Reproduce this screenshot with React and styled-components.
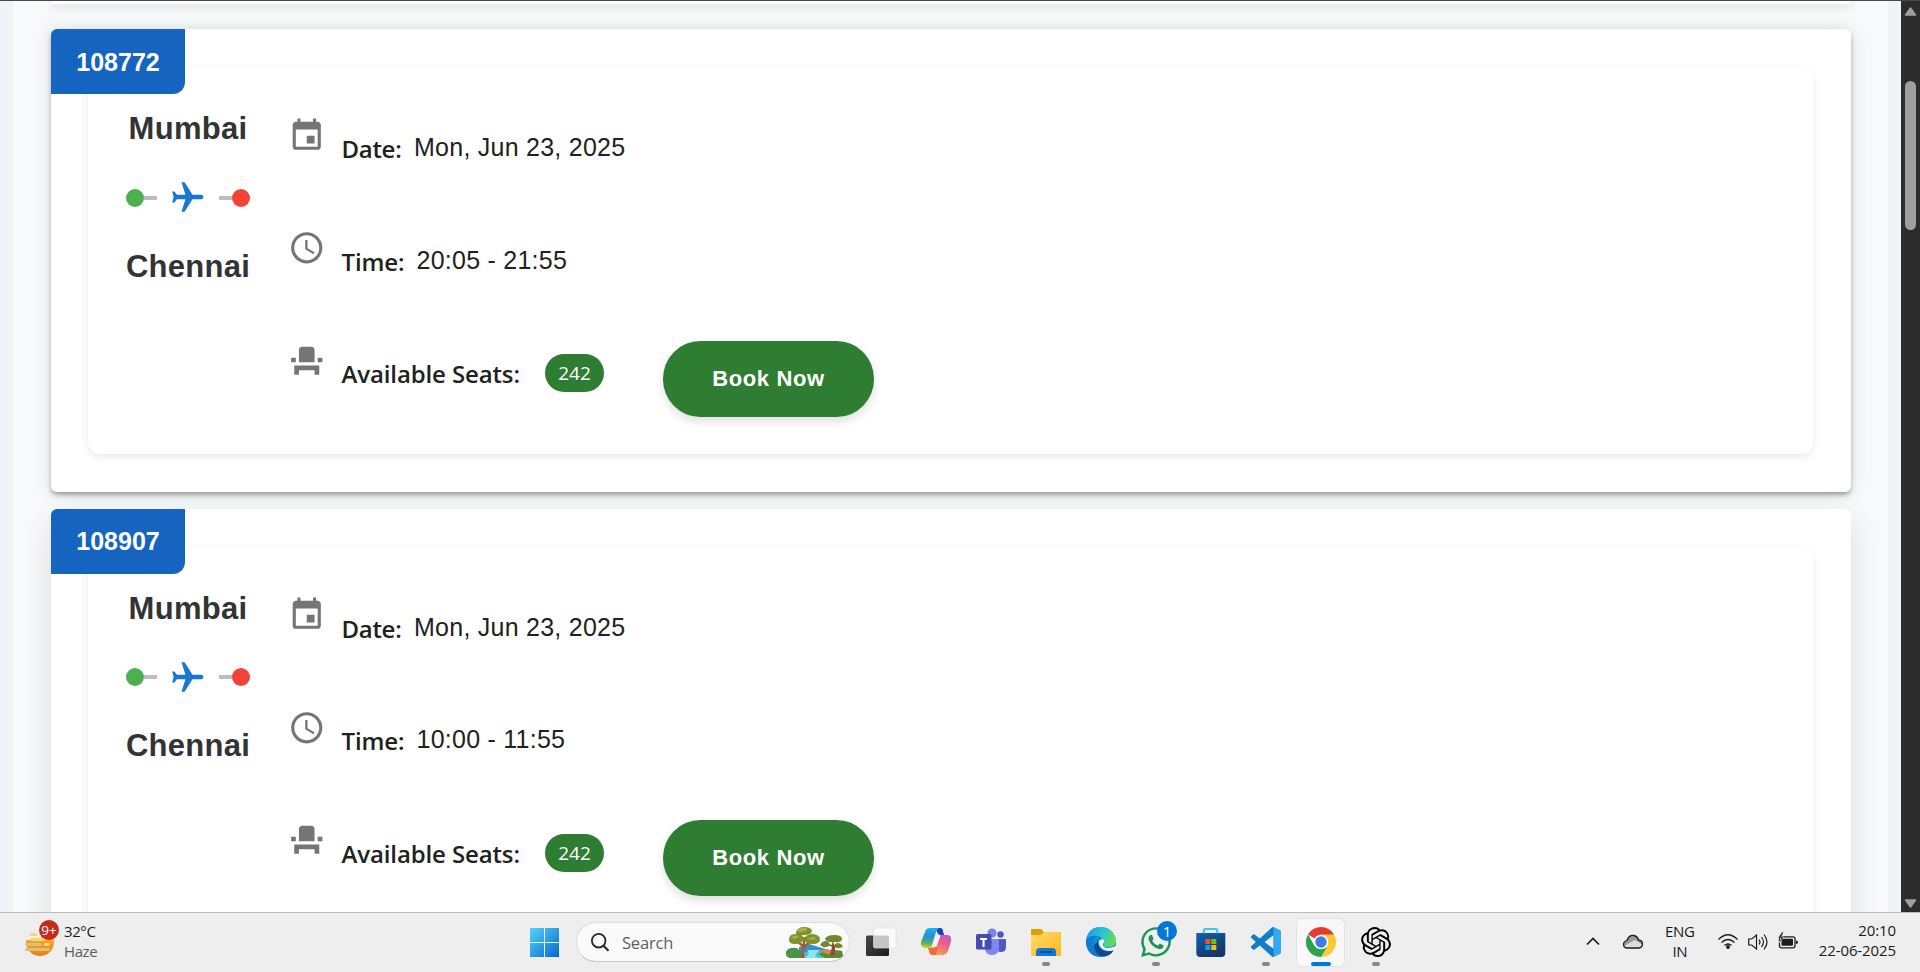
import React from "react";
import styled, { createGlobalStyle } from "styled-components";
import { FaWhatsapp } from "react-icons/fa";

const GlobalStyle = createGlobalStyle`
  *, *::before, *::after { box-sizing: border-box; }
  html, body { margin: 0; padding: 0; }
  body { overflow: hidden; font-family: "Liberation Sans", Arial, sans-serif; }
  svg { display: block; flex: none; }
`;

const humanist = `"Open Sans", "Noto Sans", sans-serif`;

const Desktop = styled.div`
  width: 1920px;
  height: 972px;
  display: flex;
  flex-direction: column;
  overflow: hidden;
  border-top: 1px solid #4a4a4c;
`;

const Browser = styled.div`
  flex: 1;
  min-height: 0;
  display: flex;
`;

const Page = styled.main`
  flex: 1;
  height: 911px;
  overflow: hidden;
  padding: 0 13px;
  background: #f0f4f9;
`;

const Results = styled.div`
  height: 911px;
  padding: 0 37px 0 38px;
  background: #f8f9fb;
  overflow: hidden;
  display: flex;
  flex-direction: column;
`;

const Card = styled.article`
  position: relative;
  flex: none;
  height: 463px;
  margin-bottom: 16.5px;
  padding: 38px 38px 37px 37px;
  border-radius: 6px;
  background: #fff;
  box-shadow: ${(p) =>
    p.$raised
      ? "0 4px 5px -2px rgba(0,0,0,.22), 0 3px 5px rgba(0,0,0,.17), 0 1px 18px rgba(0,0,0,.13)"
      : "0 12px 30px rgba(0,0,0,.12)"};
`;

const CardTail = styled.div`
  flex: none;
  height: 3px;
  margin-bottom: 25px;
  border-radius: 0 0 6px 6px;
  background: #fff;
  box-shadow: 0 2px 10px rgba(0, 0, 0, 0.22);
`;

const FlightNumber = styled.div`
  position: absolute;
  top: 0;
  left: 0;
  width: 134px;
  height: 65px;
  padding-top: 1px;
  display: flex;
  align-items: center;
  justify-content: center;
  border-radius: 6px 0 12px 0;
  background: #1565c0;
  color: #fff;
  font-size: 25px;
  font-weight: 700;
`;

const Panel = styled.div`
  height: 387px;
  padding-left: 37.5px;
  display: flex;
  border-radius: 12px;
  background: #fff;
  box-shadow: 0 3px 8px rgba(0, 0, 0, 0.09);
`;

const Route = styled.div`
  width: 125px;
  padding-top: 42px;
  display: flex;
  flex-direction: column;
  align-items: center;
  gap: 30.125px;
`;

const City = styled.div`
  font-size: 31px;
  line-height: 40px;
  font-weight: 700;
  letter-spacing: 0.28px;
  color: #333;
`;

const Path = styled.div`
  display: flex;
  align-items: center;
`;

const Dot = styled.span`
  width: 18px;
  height: 18px;
  border-radius: 50%;
  background: ${(p) => p.$color};
`;

const Line = styled.span`
  width: 13px;
  height: 4px;
  background: #bdbdbd;
`;

const PlaneIcon = styled.svg`
  width: 37.5px;
  height: 37.5px;
  margin: 0 12px;
  fill: #1976d2;
  transform: rotate(90deg);
`;

const Details = styled.div`
  padding: 49.5px 0 0 37.5px;
  display: flex;
  flex-direction: column;
  gap: 37.5px;
`;

const Row = styled.div`
  height: 75px;
  display: flex;
  align-items: flex-start;
`;

const RowIcon = styled.svg`
  width: 37.5px;
  height: 37.5px;
  margin-right: 16px;
  fill: #757575;
`;

const Label = styled.div`
  width: ${(p) => p.$width}px;
  margin-top: 15.5px;
  font-family: ${humanist};
  font-size: 24px;
  line-height: 34px;
  font-weight: 600;
  letter-spacing: ${(p) => p.$spacing || 0}px;
  white-space: nowrap;
  color: #212121;
`;

const Value = styled.div`
  margin-top: 15.5px;
  font-size: 25px;
  line-height: 30px;
  letter-spacing: 0.01em;
  color: #212121;
`;

const Seats = styled.div`
  width: 59px;
  height: 38px;
  margin: 12.5px 59px 0 0;
  display: flex;
  align-items: center;
  justify-content: center;
  border-radius: 19px;
  background: #2e7d32;
  color: #fff;
  font-family: ${humanist};
  font-size: 19px;
`;

const BookButton = styled.button`
  width: 211px;
  height: 76px;
  margin: -0.75px 0 0;
  padding: 0;
  border: 0;
  border-radius: 37.5px;
  background: #2e7d32;
  color: #fff;
  font: 700 22px "Liberation Sans", Arial, sans-serif;
  letter-spacing: 0.625px;
  box-shadow: 0 5px 10px rgba(0, 0, 0, 0.12);
`;

const Scrollbar = styled.div`
  width: 19px;
  height: 911px;
  padding: 5px 0 3px;
  display: flex;
  flex-direction: column;
  align-items: center;
  background: #2c2c2c;
`;

const Thumb = styled.div`
  width: 11px;
  height: 149px;
  margin: 65px 0 auto;
  border-radius: 6px;
  background: #9f9f9f;
`;

const Taskbar = styled.footer`
  flex: none;
  height: 60px;
  display: flex;
  border-top: 1px solid #bcbcbc;
  background: #eee;
  font-family: ${humanist};
  font-size: 15px;
  color: #1b1b1b;
`;

const Weather = styled.div`
  width: 528.5px;
  padding: 7px 0 0 25px;
  display: flex;
`;

const WeatherIcon = styled.div`
  position: relative;
  width: 39px;
`;

const AlertBadge = styled.span`
  position: absolute;
  top: 0;
  left: 14px;
  width: 20px;
  height: 20px;
  border-radius: 50%;
  background: #c42b1c;
  color: #fff;
  font-size: 13.5px;
  line-height: 20px;
  text-align: center;
`;

const Stack = styled.div`
  padding-top: ${(p) => p.$top || 0}px;
  display: flex;
  flex-direction: column;
  align-items: ${(p) => p.$align || "flex-start"};
  line-height: 20px;
  letter-spacing: ${(p) => p.$spacing || 0}px;
  white-space: nowrap;
`;

const Muted = styled.span`
  color: #5c5c5c;
`;

const StartButton = styled.div`
  width: 47.5px;
  padding-top: 14px;
`;

const SearchBox = styled.div`
  width: 274px;
  height: 40px;
  margin: 9px 3px 0 0;
  padding: 0 6px 0 14px;
  display: flex;
  align-items: center;
  border: 1px solid #dcdcdc;
  border-bottom-color: #c6c6c6;
  border-radius: 20px;
  background: #fafafa;
`;

const SearchText = styled.span`
  flex: 1;
  padding-left: 13px;
  font-size: 16.5px;
  letter-spacing: -0.2px;
  color: #5f5f5f;
`;

const AppSlot = styled.div`
  position: relative;
  width: 55px;
  height: 59px;
  padding: 14px 0 0;
  display: flex;
  justify-content: center;
`;

const ActiveTile = styled.div`
  position: absolute;
  left: 3px;
  top: 5px;
  width: 49px;
  height: 49px;
  border: 1px solid #e3e3e3;
  border-radius: 6px;
  background: #f8f8f8;
`;

const Indicator = styled.span`
  position: absolute;
  left: 50%;
  top: 49px;
  width: ${(p) => (p.$active ? 20 : 8)}px;
  height: 4px;
  border-radius: 2px;
  background: ${(p) => (p.$active ? "#0078d4" : "#868686")};
  transform: translateX(-50%);
`;

const CountBadge = styled.span`
  position: absolute;
  left: 29px;
  top: 8px;
  width: 20px;
  height: 20px;
  border-radius: 50%;
  background: #0078d4;
  color: #fff;
  font-size: 15px;
  line-height: 20px;
  text-align: center;
`;

const Glyph = styled.svg`
  position: relative;
  width: 30px;
  height: 30px;
  overflow: visible;
`;

const WhatsApp = styled(FaWhatsapp)`
  width: 34px;
  height: 34px;
  margin-top: -2px;
  color: #1d9457;
`;

const Tray = styled.div`
  margin-left: auto;
  padding: 7px 24px 0 0;
  display: flex;
`;

const TrayIcon = styled.svg`
  height: 20px;
  margin: 12px ${(p) => p.$gap}px 0 0;
  overflow: visible;
`;

const flights = [
  { id: "108772", time: "20:05 - 21:55", raised: true },
  { id: "108907", time: "10:00 - 11:55", raised: false },
];

function FlightCard({ id, time, raised }) {
  return (
    <Card $raised={raised}>
      <Panel>
        <Route>
          <City>Mumbai</City>
          <Path>
            <Dot $color="#4caf50" />
            <Line />
            <PlaneIcon viewBox="0 0 24 24">
              <path d="M21 16v-2l-8-5V3.500c0-.83-.67-1.500-1.500-1.500S10 2.670 10 3.500V9l-8 5v2l8-2.500V19l-2 1.500V22l3.500-1 3.500 1v-1.500L13 19v-5.500l8 2.500z" />
            </PlaneIcon>
            <Line />
            <Dot $color="#f44336" />
          </Path>
          <City>Chennai</City>
        </Route>
        <Details>
          <Row>
            <RowIcon viewBox="0 0 24 24">
              <path d="M17 12h-5v5h5v-5zM16 1v2H8V1H6v2H5c-1.110 0-1.990.9-1.990 2L3 19c0 1.100.89 2 2 2h14c1.100 0 2-.9 2-2V5c0-1.100-.9-2-2-2h-1V1h-2zm3 18H5V8h14v11z" />
            </RowIcon>
            <Label $width={72.5} $spacing={-0.3}>Date:</Label>
            <Value>Mon, Jun 23, 2025</Value>
          </Row>
          <Row>
            <RowIcon viewBox="0 0 24 24">
              <path d="M11.990 2C6.470 2 2 6.480 2 12s4.470 10 9.990 10C17.520 22 22 17.520 22 12S17.520 2 11.990 2zM12 20c-4.420 0-8-3.580-8-8s3.580-8 8-8 8 3.580 8 8-3.580 8-8 8zm.5-13H11v6l5.250 3.150.75-1.230-4.500-2.670z" />
            </RowIcon>
            <Label $width={75} $spacing={-0.1}>Time:</Label>
            <Value>{time}</Value>
          </Row>
          <Row>
            <RowIcon viewBox="0 0 24 24">
              <path d="M4 18v3h3v-3h10v3h3v-6H4zm15-8h3v3h-3zM2 10h3v3H2zm15 3H7V5c0-1.100.9-2 2-2h6c1.100 0 2 .9 2 2v8z" />
            </RowIcon>
            <Label $width={203.5} $spacing={-0.12}>
              Available Seats:
            </Label>
            <Seats>242</Seats>
            <BookButton>Book Now</BookButton>
          </Row>
        </Details>
      </Panel>
      <FlightNumber>{id}</FlightNumber>
    </Card>
  );
}

const HazeIcon = () => (
  <svg width="30" height="38" viewBox="0 0 30 38">
    <defs>
      <linearGradient id="haze" x1="0" y1="0" x2="0" y2="1">
        <stop offset="0" stopColor="#ffc532" />
        <stop offset="1" stopColor="#f27a17" />
      </linearGradient>
    </defs>
    <circle cx="15" cy="22" r="14" fill="url(#haze)" />
    <path d="M0 4h16v16H0z" fill="#eee" />
    <g strokeLinecap="round" strokeWidth="3" stroke="#f3d67c">
      <path d="M6.500 14.500h4M6.500 19.500h12" />
      <path d="M1.500 24.500h14M1.500 29.500h22" stroke="#d9c27c" />
      <path d="M20.500 24.500h3" />
    </g>
  </svg>
);

const StartIcon = () => (
  <Glyph viewBox="0 0 30 30">
    <defs>
      <linearGradient id="win" x1="0" y1="0" x2="1" y2="1">
        <stop offset="0" stopColor="#55d3fc" />
        <stop offset="1" stopColor="#0669cf" />
      </linearGradient>
    </defs>
    <path fill="url(#win)" d="M1 1h14v14H1zM16 1h14v14H16zM1 16h14v14H1zM16 16h14v14H16z" />
  </Glyph>
);

const ForestIcon = () => (
  <svg width="58" height="33" viewBox="0 0 58 33">
    <path d="M14 21l10-3 13 4 10 3-6 7H14z" fill="#3b8fc4" />
    <path d="M18 27l12-3 14 4 6 4H15z" fill="#45c5e2" />
    <path d="M33 28q12-6 24-3l1 5-3 2H40z" fill="#598b35" />
    <path d="M32 25q12-4 20 1l-7 3q-8-3-13-4z" fill="#c58a55" />
    <path d="M1 26q2-4 6-4 5-1 7 2 4 1 3 8H5q-5-1-4-6z" fill="#4b9146" />
    <path d="M15 32q4-7 1-12L9 14l1.500-1 7 5 1-7h1.500v7l8-4 1 1-9 6-1 6 1 5z" fill="#a25a39" />
    <path d="M45 29l2-8-6-4 6 2 1-6 1 6 5-2-4 4v8z" fill="#90482f" />
    <path d="M11 6q2-5 8-5 7 0 8 4 0 4-8 4-9 1-8-3zM4 14q0-6 6-6 8 0 9 5-2 5-9 5-6 0-6-4zM19 14q1-6 9-6 7 1 7 5 0 5-7 5-8 0-9-4z" fill="#7e952f" />
    <path d="M12 5q3-4 9-3 2 2-2 3.500-5 1-7-.5zM6 12q4-4 8-2-3 4-8 2zM23 13q4-3 8-1-3 3-8 1z" fill="#b2b044" />
    <path d="M40 13q2-4 9-4 8 0 8 4-1 4-7 3-8 1-10-3zM35 19q2-4 6-4 4 1 4 4.500-4 2.500-7 1.500zM49 20q1-3 4.500-3 5 2 4 4-6 3-8.500-1z" fill="#6f8a2c" />
    <path d="M22 24q5 4-3 8h14q-6-3 2-8z" fill="#8ee6f0" />
  </svg>
);

const TaskViewIcon = () => (
  <Glyph viewBox="0 0 30 30">
    <defs>
      <linearGradient id="tv" x1="0" y1="0" x2="1" y2="1">
        <stop offset="0" stopColor="#484848" />
        <stop offset="1" stopColor="#1a1a1a" />
      </linearGradient>
    </defs>
    <rect x="0" y="8.500" width="23" height="20.500" rx="1.500" fill="url(#tv)" />
    <rect x="7.500" y="1" width="22.500" height="20" rx="1.500" fill="#fff" fillOpacity=".72" stroke="#dedede" strokeWidth=".7" />
  </Glyph>
);

const CopilotIcon = () => (
  <Glyph viewBox="0 0 30 30">
    <defs>
      <linearGradient id="cpA" x1=".5" y1="0" x2=".35" y2="1">
        <stop offset="0" stopColor="#16b5e8" />
        <stop offset=".4" stopColor="#2190d8" />
        <stop offset=".75" stopColor="#4eb06c" />
        <stop offset="1" stopColor="#e9c61e" />
      </linearGradient>
      <linearGradient id="cpB" x1=".7" y1="0" x2=".3" y2="1">
        <stop offset="0" stopColor="#a65ae8" />
        <stop offset=".5" stopColor="#ee5b8e" />
        <stop offset="1" stopColor="#ffa44b" />
      </linearGradient>
    </defs>
    <path d="M15 1h4q2 0 3 3l1 4h4q4 1 3 6l-3 10q-2 4-6 4H11q-3 0-3-4l1-3h3q3 0 4-3l3-8q1-3-1-4z" fill="url(#cpB)" />
    <path d="M15 1h4q3 0 3 4l1 3h-4q-2 0-3-3z" fill="#1546c4" />
    <path d="M7 21l1 3q1 4 4 4h2q2-1 2-4l1-4z" fill="#f36a3d" />
    <path d="M9 1h9q-2 1-3 4l-4 13q-1 3-4 3H4q-5-1-4-6L4 5q1-4 5-4z" fill="url(#cpA)" />
    <path d="M16 9h3l-4 11h-3z" fill="#f6f3ef" />
  </Glyph>
);

const TeamsIcon = () => (
  <Glyph viewBox="0 0 30 30">
    <circle cx="24.500" cy="7.500" r="3.200" fill="#4f56c4" />
    <circle cx="16" cy="6" r="4.600" fill="#7b83eb" />
    <path d="M21 12h8q1 0 1 1v7q0 5-5 5-4 0-5-4z" fill="#5059c9" />
    <path d="M10 12h12q1 0 1 1v8q0 7-7 7-6 0-7-6z" fill="#7f87e8" />
    <rect x="0" y="7" width="15.500" height="15.500" rx="1.500" fill="#454bb0" />
    <path d="M4 11h7v2H8.600v7H6.500v-7H4z" fill="#fff" />
  </Glyph>
);

const FolderIcon = () => (
  <Glyph viewBox="0 0 30 30">
    <defs>
      <linearGradient id="fold" x1="0" y1="0" x2="1" y2="1">
        <stop offset="0" stopColor="#ffdc6e" />
        <stop offset="1" stopColor="#fcb713" />
      </linearGradient>
    </defs>
    <path d="M0 3q0-1 1-1h9l3 3h16q1 0 1 1v8H0z" fill="#dfa000" />
    <path d="M0 8h10l3-3h16q1 0 1 1v22q0 1-1 1H1q-1 0-1-1z" fill="url(#fold)" />
    <path d="M5 29v-4q0-4 4-4h12q4 0 4 4v4z" fill="#0f78cf" />
    <path d="M9 25h12" stroke="#07479a" strokeWidth="1.500" />
  </Glyph>
);

const EdgeIcon = () => (
  <Glyph viewBox="0 0 30 30">
    <defs>
      <linearGradient id="edgeA" x1="0" y1=".3" x2="1" y2=".6">
        <stop offset="0" stopColor="#169fdc" />
        <stop offset=".5" stopColor="#2bc4d6" />
        <stop offset="1" stopColor="#66e04c" />
      </linearGradient>
      <linearGradient id="edgeB" x1="0" y1="0" x2=".7" y2="1">
        <stop offset="0" stopColor="#1fa5e2" />
        <stop offset="1" stopColor="#0665bd" />
      </linearGradient>
    </defs>
    <circle cx="15" cy="15" r="15" fill="url(#edgeB)" />
    <path d="M8 18q0 8 7 11 8 2 13-6-5 3-10 1-6-2-6-9z" fill="#114a8b" />
    <path d="M0 13Q2 0 15 0q12 1 15 12 1 7-6 8-5 1-7-1 2-3 0-6-3-5-9-4-5 0-8 4z" fill="url(#edgeA)" />
    <path d="M0 13Q4 8 10 9q-5 3-4 11 1 6 8 10Q1 29 0 15z" fill="#0d7bd0" />
    <path d="M13 14q2-3 5-1 1 2-1 4-1 3 4 4 4 0 9-2l-1 4q-6 2-11 0-6-3-5-9z" fill="#f0f2f4" />
  </Glyph>
);

const StoreIcon = () => (
  <Glyph viewBox="0.7 0 30 30">
    <defs>
      <linearGradient id="store" x1="0" y1="0" x2=".6" y2="1">
        <stop offset="0" stopColor="#0a62b8" />
        <stop offset="1" stopColor="#183464" />
      </linearGradient>
    </defs>
    <path d="M8.500 8V3.500q0-1.500 1.500-1.500h10.500q1.500 0 1.500 1.500V8" fill="none" stroke="#3fc4f3" strokeWidth="2" />
    <path d="M1 6h29v20q0 4-4 4H5q-4 0-4-4z" fill="url(#store)" />
    <path d="M8.500 5v1.500M22 5v1.500" fill="none" stroke="#3fc4f3" strokeWidth="2" />
    <path d="M10 12h5v5h-5z" fill="#f25022" />
    <path d="M16 12h5v5h-5z" fill="#7fba00" />
    <path d="M10 18h5v5h-5z" fill="#00a4ef" />
    <path d="M16 18h5v5h-5z" fill="#ffb900" />
  </Glyph>
);

const CodeIcon = () => (
  <Glyph viewBox="0 0 24 24">
    <path
      fill="#0f7fca"
      d="M23.150 2.587L18.210.21a1.494 1.494 0 0 0-1.705.29l-9.460 8.630-4.120-3.128a.999.999 0 0 0-1.276.057L.327 7.261A1 1 0 0 0 .326 8.740L3.899 12 .326 15.260a1 1 0 0 0 .001 1.479L1.650 17.940a.999.999 0 0 0 1.276.057l4.120-3.128 9.460 8.630a1.492 1.492 0 0 0 1.704.290l4.942-2.377A1.500 1.500 0 0 0 24 20.060V3.939a1.500 1.500 0 0 0-.85-1.352zm-5.146 14.861L10.826 12l7.178-5.448v10.896z"
    />
    <path fill="#30aaf2" d="M18 .2l5.150 2.387Q24 3 24 3.939V20.060q0 1-.85 1.352L18.200 23.800z" />
  </Glyph>
);

const ChromeIcon = () => (
  <Glyph viewBox="0 0 30 30">
    <path d="M15 15L2 7.500A15 15 0 0 1 28 7.500z" fill="#e33b2e" />
    <path d="M15 15V7.500h13A15 15 0 0 1 15 30l6.500-11.200z" fill="#fcc934" />
    <path d="M2 7.500l6.500 11.300L15 22l6.100-2.200L15 30A15 15 0 0 1 2 7.500z" fill="#2da14c" />
    <circle cx="15" cy="15" r="7.300" fill="#fff" />
    <circle cx="15" cy="15" r="5.700" fill="#3a7de8" />
  </Glyph>
);

const KnotIcon = () => (
  <Glyph viewBox="0 0 24 24">
    <path d="M22.2819 9.8211a5.9847 5.9847 0 0 0-.5157-4.9108 6.0462 6.0462 0 0 0-6.5098-2.9A6.0651 6.0651 0 0 0 4.9807 4.1818a5.9847 5.9847 0 0 0-3.9977 2.9 6.0462 6.0462 0 0 0 .7427 7.0966 5.98 5.98 0 0 0 .511 4.9107 6.051 6.051 0 0 0 6.5146 2.9001A5.9847 5.9847 0 0 0 13.2599 24a6.0557 6.0557 0 0 0 5.7718-4.2058 5.9894 5.9894 0 0 0 3.9977-2.9001 6.0557 6.0557 0 0 0-.7475-7.0729zm-9.022 12.6081a4.4755 4.4755 0 0 1-2.8764-1.0408l.1419-.0804 4.7783-2.7582a.7948.7948 0 0 0 .3927-.6813v-6.7369l2.02 1.1686a.071.071 0 0 1 .038.0615v5.5826a4.504 4.504 0 0 1-4.4945 4.4849zm-9.6607-4.1254a4.4708 4.4708 0 0 1-.5346-3.0137l.142.0852 4.783 2.7582a.7712.7712 0 0 0 .7806 0l5.8428-3.3685v2.3324a.0804.0804 0 0 1-.0332.0615L9.74 19.9502a4.4992 4.4992 0 0 1-6.1408-1.6464zM2.3408 7.8956a4.485 4.485 0 0 1 2.3655-1.9728V11.6a.7664.7664 0 0 0 .3879.6765l5.8144 3.3543-2.0201 1.1685a.0757.0757 0 0 1-.071 0l-4.8303-2.7865A4.504 4.504 0 0 1 2.3408 7.872zm16.5963 3.8558L13.1038 8.364 15.1192 7.2a.0757.0757 0 0 1 .071 0l4.8303 2.7913a4.4944 4.4944 0 0 1-.6765 8.1042v-5.6772a.79.79 0 0 0-.407-.667zm2.0107-3.0231l-.142-.0852-4.7735-2.7818a.7759.7759 0 0 0-.7854 0L9.409 9.2297V6.8974a.0662.0662 0 0 1 .0284-.0615l4.8303-2.7866a4.4992 4.4992 0 0 1 6.6802 4.66zM8.3065 12.863l-2.02-1.1638a.0804.0804 0 0 1-.038-.0567V6.0742a4.4992 4.4992 0 0 1 7.3757-3.4537l-.142.0805L8.704 5.459a.7948.7948 0 0 0-.3927.6813zm1.0976-2.3654l2.602-1.4998 2.6069 1.4998v2.9994l-2.5974 1.4997-2.6067-1.4997Z" />
  </Glyph>
);

function TaskbarApp({ children, running, active, count }) {
  return (
    <AppSlot>
      {active && <ActiveTile />}
      {children}
      {(running || active) && <Indicator $active={active} />}
      {count && <CountBadge>{count}</CountBadge>}
    </AppSlot>
  );
}

function SystemTray() {
  return (
    <Tray>
      <TrayIcon $gap={23} width="14" viewBox="0 0 14 20">
        <path d="M1 12.500l6-6 6 6" fill="none" stroke="#1b1b1b" strokeWidth="1.700" />
      </TrayIcon>
      <TrayIcon $gap={22.5} width="20" viewBox="0 -1 20 20">
        <path d="M4 15q-3.500-.5-3.500-3.500T4 7.500Q6 2 10.500 2.500 14.500 3 15.500 7q4 .5 4 4t-4 4z" fill="#9a9a9a" />
        <path d="M1 13L12 7l7.500 5q-1 3-4 3H4q-2.500 0-3-2z" fill="#dedede" />
        <path d="M4 15q-3.500-.5-3.500-3.500T4 7.500Q6 2 10.500 2.500 14.500 3 15.500 7q4 .5 4 4t-4 4z" fill="none" stroke="#1b1b1b" strokeWidth="1.300" />
      </TrayIcon>
      <Stack $top={1} $align="center" $spacing={-0.3}>
        <span>ENG</span>
        <span>IN</span>
      </Stack>
      <TrayIcon $gap={10} width="43" viewBox="-23 0 43 20">
        <g fill="none" stroke="#1b1b1b" strokeWidth="1.400">
          <path d="M.5 7.500Q10-2 19.500 7.500M3.500 10.500q6.500-6 13 0M6.500 13.500q3.500-3 7 0" />
        </g>
        <circle cx="10" cy="15" r="1.900" fill="#1b1b1b" />
      </TrayIcon>
      <TrayIcon $gap={10} width="20" viewBox="0 0 20 20">
        <g fill="none" stroke="#1b1b1b" strokeWidth="1.200">
          <path d="M.7 7h3L8.500 3v14l-4.800-4h-3z" />
          <path d="M11 7.500q2 2.500 0 5M13.500 5q4 5 0 10M16 2.500q6 7.500 0 15" />
        </g>
      </TrayIcon>
      <TrayIcon $gap={21} width="20" viewBox="0 0 20 20">
        <rect x="1.500" y="4.800" width="15.500" height="11" rx="2" fill="none" stroke="#1b1b1b" strokeWidth="1.300" />
        <rect x="3.500" y="6.800" width="11.500" height="7" rx="1" fill="#1b1b1b" />
        <path d="M18 8.500q2 0 2 1.800t-2 1.800z" fill="#1b1b1b" />
        <path d="M4 0L0 6h3l-2 5 5-6H3.500L5.500 0z" fill="#1b1b1b" stroke="#eee" strokeWidth=".5" />
      </TrayIcon>
      <Stack $align="flex-end" $spacing={-0.1}>
        <span>20:10</span>
        <span>22-06-2025</span>
      </Stack>
    </Tray>
  );
}

export default function App() {
  return (
    <Desktop>
      <GlobalStyle />
      <Browser>
        <Page>
          <Results>
            <CardTail />
            {flights.map((f) => (
              <FlightCard key={f.id} {...f} />
            ))}
          </Results>
        </Page>
        <Scrollbar>
          <svg width="13" height="10" viewBox="0 0 13 10">
            <path d="M6.500 2L11.500 9h-10z" fill="#9f9f9f" stroke="#9f9f9f" strokeWidth="1.500" strokeLinejoin="round" />
          </svg>
          <Thumb />
          <svg width="13" height="10" viewBox="0 0 13 10">
            <path d="M6.500 8L11.500 1h-10z" fill="#9f9f9f" stroke="#9f9f9f" strokeWidth="1.500" strokeLinejoin="round" />
          </svg>
        </Scrollbar>
      </Browser>
      <Taskbar>
        <Weather>
          <WeatherIcon>
            <HazeIcon />
            <AlertBadge>9+</AlertBadge>
          </WeatherIcon>
          <Stack $top={0.5} $spacing={-0.4}>
            <span>32°C</span>
            <Muted>Haze</Muted>
          </Stack>
        </Weather>
        <StartButton>
          <StartIcon />
        </StartButton>
        <SearchBox>
          <svg width="18" height="19" viewBox="0 0 18 19">
            <circle cx="7.700" cy="7.700" r="6.800" fill="none" stroke="#2b2b2b" strokeWidth="1.800" />
            <path d="M12.500 12.800l5 5" stroke="#2b2b2b" strokeWidth="2.200" />
          </svg>
          <SearchText>Search</SearchText>
          <ForestIcon />
        </SearchBox>
        <TaskbarApp><TaskViewIcon /></TaskbarApp>
        <TaskbarApp><CopilotIcon /></TaskbarApp>
        <TaskbarApp><TeamsIcon /></TaskbarApp>
        <TaskbarApp running><FolderIcon /></TaskbarApp>
        <TaskbarApp><EdgeIcon /></TaskbarApp>
        <TaskbarApp running count="1"><WhatsApp /></TaskbarApp>
        <TaskbarApp><StoreIcon /></TaskbarApp>
        <TaskbarApp running><CodeIcon /></TaskbarApp>
        <TaskbarApp active><ChromeIcon /></TaskbarApp>
        <TaskbarApp running><KnotIcon /></TaskbarApp>
        <SystemTray />
      </Taskbar>
    </Desktop>
  );
}
